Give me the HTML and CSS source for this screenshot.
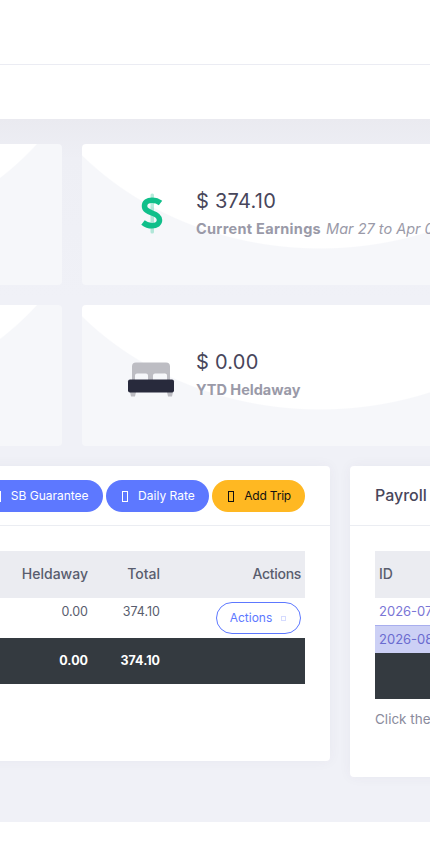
FILE: index.html
```html
<!DOCTYPE html>
<html lang="en">
<head>
<meta charset="utf-8">
<title>Earnings</title>
<link rel="stylesheet" href="styles.css">
</head>
<body>
<header class="topbar"></header>
<nav class="subbar"></nav>
<main class="content">
  <section class="cards">
    <article class="card"></article>
    <article class="card">
      <svg class="card-icon" viewBox="0 0 60 44" width="60" height="44" aria-hidden="true">
        <rect x="28.500" y="0.500" width="3.500" height="40" rx="1.500" fill="#10bf8a" opacity=".3"/>
        <path d="M38.500 10C36 8 33 7.200 30 7.200C25.500 7.200 22.500 9.500 22.500 13C22.500 17 26 18.500 30 20C34.500 21.500 37.500 23 37.500 27C37.500 30.500 34.500 32.800 30 32.800C26.500 32.800 23.500 31.500 21 29.500" fill="none" stroke="#10bf8a" stroke-width="5.500"/>
      </svg>
      <div class="card-text">
        <div class="amount">$ 374.10</div>
        <div class="label label-wide"><strong>Current Earnings</strong> <em>Mar 27 to Apr 09</em></div>
      </div>
    </article>
    <article class="card"></article>
    <article class="card">
      <svg class="card-icon" viewBox="0 0 60 44" width="60" height="44" aria-hidden="true">
        <path d="M10 26V12.500a4 4 0 0 1 4-4h30a4 4 0 0 1 4 4V26h-3v-4.500a2 2 0 0 0-2-2H33a2 2 0 0 0-2 2V26h-5v-4.500a2 2 0 0 0-2-2h-9a2 2 0 0 0-2 2V26z" fill="#bdbdc3"/>
        <path d="M8 38h6l-1 4.500H9zM45 38h6l-1 4.500h-4z" fill="#bdbdc3"/>
        <rect x="6" y="25.500" width="46" height="13" rx="2" fill="#282a3c"/>
      </svg>
      <div class="card-text">
        <div class="amount">$ 0.00</div>
        <div class="label"><strong>YTD Heldaway</strong></div>
      </div>
    </article>
  </section>

  <section class="panels">
    <article class="panel panel-trips">
      <div class="panel-head head-end">
        <a class="pill pill-blue"><i class="tofu"></i>SB Guarantee</a>
        <a class="pill pill-blue"><i class="tofu"></i>Daily Rate</a>
        <a class="pill pill-amber"><i class="tofu"></i>Add Trip</a>
      </div>
      <div class="panel-body">
        <table class="trips">
          <thead>
            <tr><th></th><th>Heldaway</th><th>Total</th><th>Actions</th></tr>
          </thead>
          <tbody>
            <tr><td></td><td>0.00</td><td>374.10</td><td><a class="action-btn">Actions<i class="tofu-small"></i></a></td></tr>
          </tbody>
          <tfoot>
            <tr><td></td><td>0.00</td><td>374.10</td><td></td></tr>
          </tfoot>
        </table>
      </div>
    </article>

    <article class="panel panel-payroll">
      <div class="panel-head"><h2 class="panel-title">Payroll</h2></div>
      <div class="panel-body">
        <table class="payroll">
          <thead><tr><th>ID</th></tr></thead>
          <tbody>
            <tr><td><a>2026-07</a></td></tr>
            <tr class="selected"><td><a>2026-08</a></td></tr>
          </tbody>
          <tfoot><tr><td></td></tr></tfoot>
        </table>
        <p class="hint">Click the ID to view</p>
      </div>
    </article>
  </section>
</main>
<footer class="footer"></footer>
</body>
</html>
```
FILE: styles.css
```css
* { box-sizing: border-box; }
html, body { margin: 0; padding: 0; height: 859px; overflow: hidden; background: #fff; }
body { font-family: "Inter", "Open Sans", sans-serif; color: #595d6e; }

.topbar { height: 65px; background: #fff; border-bottom: 1px solid #ebecf3; }
.subbar { height: 54px; background: #fff; }

.content {
  height: 703px;
  padding: 25px 0 0;
  margin-left: -450px;
  width: 1400px;
  background: linear-gradient(#eaeaf0, #eeeff5 40px, #f0f1f7 180px);
}

.cards {
  display: grid;
  grid-template-columns: 512px 512px;
  grid-auto-rows: 141px;
  gap: 20px;
}
.card {
  display: flex;
  align-items: center;
  padding-left: 40px;
  border-radius: 4px;
  background: radial-gradient(ellipse 320px 280px at 238px -175px, #fff 99.6%, #f6f7fa 100%);
}
.card-icon { flex: none; margin: 0 15px 0 0; }
.card-text { margin-top: -5px; margin-left: -1px; }
.amount { font-size: 20px; line-height: 30px; font-weight: 400; color: #48465b; letter-spacing: .25px; }
.label { font-size: 14.500px; line-height: 21px; margin-top: 2px; color: #9a9aa8; white-space: nowrap; }
.label strong { font-weight: 700; }
.label em { font-style: italic; }
.label-wide strong { letter-spacing: .3px; }
.label-wide em { margin-left: 1px; }

.panels { display: flex; align-items: flex-start; gap: 20px; margin-top: 20px; }
.panel { background: #fff; border-radius: 4px; box-shadow: 0 0 13px rgba(82, 63, 105, .05); }
.panel-trips { width: 780px; height: 295px; }
.panel-payroll { width: 500px; height: 311px; }

.panel-head {
  display: flex;
  align-items: center;
  height: 60px;
  padding: 0 25px;
  border-bottom: 1px solid #ebedf2;
}
.head-end { justify-content: flex-end; gap: 3.500px; }
.panel-title { margin: 0 0 2px; font-size: 16px; font-weight: 500; color: #48465b; }
.panel-body { padding: 25px; }

.pill {
  display: flex;
  align-items: center;
  height: 32px;
  padding: 0 14px 0 16px;
  border-radius: 16px;
  font-size: 12px;
  white-space: nowrap;
}
.pill-blue { background: #5d78ff; color: #fff; }
.pill-amber { background: #ffb822; color: #111; letter-spacing: -.2px; }
.tofu { width: 6px; height: 11px; margin: 2px 10px 0 0; border: 1px solid currentColor; }

table { border-collapse: collapse; width: 100%; font-size: 12.500px; }
th { height: 47px; background: #ebecf1; font-size: 14px; font-weight: 500; color: #595d6e; padding: 0 4px 3px; }
td { padding: 0 4px; color: #595d6e; }
tfoot td { background: #343a40; color: #fff; font-weight: 700; padding-bottom: 2px; }

.trips { table-layout: fixed; }
.trips th, .trips td { text-align: right; }
.trips th:nth-child(2), .trips th:nth-child(3), .trips td:nth-child(2), .trips td:nth-child(3) { padding-right: 0; }
.trips th:nth-child(2) { width: 100px; }
.trips th:nth-child(3) { width: 72px; }
.trips th:nth-child(4) { width: 145px; letter-spacing: -.3px; }
.trips tbody td { height: 40px; vertical-align: top; padding-top: 6px; }
.trips tbody td:last-child { padding-top: 4px; }
.trips tfoot td { height: 46px; }

.action-btn {
  display: inline-flex;
  align-items: center;
  justify-content: center;
  width: 85px;
  height: 32px;
  padding-bottom: 2px;
  border: 1px solid #5d78ff;
  border-radius: 16px;
  color: #5d78ff;
  font-size: 12px;
}
.tofu-small { width: 5px; height: 5px; margin: 2px 1px 0 9px; border: 1px solid #d5dbff; }

.payroll th, .payroll td { text-align: left; }
.payroll tbody td { height: 27px; font-size: 13px; color: #7a76d6; }
.payroll .selected td { height: 28px; background: #ccd0f5; border-top: 1px solid #a8aeee; color: #6a6bd0; }
.payroll tfoot td { height: 46px; }
.hint { margin: 12px 0 0; font-size: 13.500px; color: #8a8b9c; white-space: nowrap; }

.footer { height: 37px; background: #fff; }
```
